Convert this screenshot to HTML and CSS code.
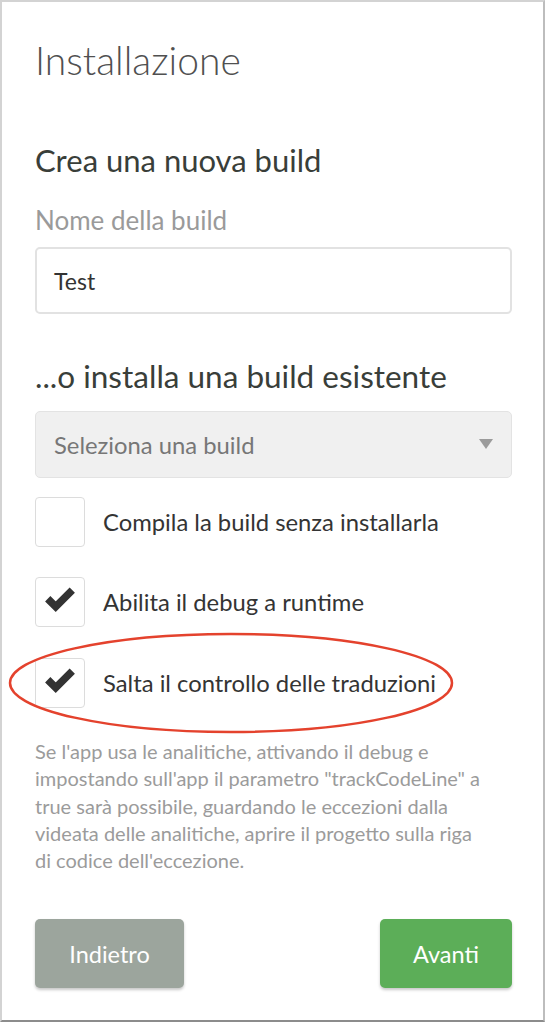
FILE: index.html
```html
<!DOCTYPE html>
<html lang="it">
<head>
<meta charset="utf-8">
<title>Installazione</title>
<link rel="stylesheet" href="styles.css">
</head>
<body>
<div class="frame">
  <h1 class="title">Installazione</h1>

  <h2 class="section">Crea una nuova build</h2>
  <label class="field-label">Nome della build</label>
  <div class="input">Test</div>

  <h2 class="section section-existing">...o installa una build esistente</h2>
  <div class="select">
    <span class="select-text">Seleziona una build</span>
    <span class="caret"></span>
  </div>

  <ul class="options">
    <li class="option">
      <span class="box"></span>
      <span class="option-label">Compila la build senza installarla</span>
    </li>
    <li class="option">
      <span class="box"><svg class="check" viewBox="0 0 30 25" width="32" height="26.7"><polyline points="3.5,11 11,18.5 26.5,3" /></svg></span>
      <span class="option-label">Abilita il debug a runtime</span>
    </li>
    <li class="option">
      <span class="box"><svg class="check" viewBox="0 0 30 25" width="32" height="26.7"><polyline points="3.5,11 11,18.5 26.5,3" /></svg></span>
      <span class="option-label">Salta il controllo delle traduzioni</span>
    </li>
  </ul>

  <p class="note">Se l'app usa le analitiche, attivando il debug e<br>impostando sull'app il parametro "trackCodeLine" a<br>true sarà possibile, guardando le eccezioni dalla<br>videata delle analitiche, aprire il progetto sulla riga<br>di codice dell'eccezione.</p>

  <div class="actions">
    <button class="btn btn-back">Indietro</button>
    <button class="btn btn-next">Avanti</button>
  </div>

  <svg class="annotation" viewBox="0 0 446 102" width="446" height="102"><ellipse cx="223" cy="51" rx="221" ry="49" /></svg>
</div>
</body>
</html>
```

FILE: styles.css
```css
html, body {
  margin: 0;
  padding: 0;
  background: #ffffff;
}

.frame {
  position: relative;
  box-sizing: border-box;
  width: 545px;
  height: 1022px;
  border: 2px solid #d3d3d3;
  border-right-color: #bdbdbd;
  border-bottom-color: #8c8c8c;
  padding: 36px 31px 0 33px;
  font-family: "Lato", "Liberation Sans", sans-serif;
  background: #ffffff;
}

.title {
  margin: 0;
  font-weight: 300;
  font-size: 39px;
  line-height: 44px;
  color: #505050;
}

.section {
  margin: 60px 0 0;
  font-weight: 400;
  font-size: 31px;
  line-height: 36px;
  color: #393e39;
}

.field-label {
  display: block;
  margin-top: 26.5px;
  font-size: 26px;
  line-height: 30px;
  color: #9a9a9a;
}

.input {
  box-sizing: border-box;
  margin-top: 12.5px;
  height: 67px;
  border: 2px solid #e2e2e2;
  border-radius: 5px;
  padding: 0 17px;
  display: flex;
  align-items: center;
  font-size: 23px;
  color: #333333;
}

.section-existing {
  margin-top: 43.6px;
  font-size: 31.5px;
}

.select {
  box-sizing: border-box;
  margin-top: 17.7px;
  height: 67px;
  background: #f0f0f0;
  border: 1px solid #e3e3e3;
  border-radius: 5px;
  padding: 0 18px 0 18px;
  display: flex;
  align-items: center;
  justify-content: space-between;
  font-size: 23.8px;
  color: #777777;
}

.caret {
  width: 0;
  height: 0;
  border-left: 7px solid transparent;
  border-right: 7px solid transparent;
  border-top: 10px solid #9b9b9b;
  margin-bottom: 2px;
}

.options {
  list-style: none;
  margin: 18.7px 0 0;
  padding: 0;
  display: flex;
  flex-direction: column;
  gap: 30.3px;
}

.option {
  display: flex;
  align-items: center;
  gap: 18px;
  height: 50px;
}

.box {
  box-sizing: border-box;
  flex: 0 0 50px;
  width: 50px;
  height: 50px;
  border: 1.5px solid #dcdcdc;
  border-radius: 4px;
  display: flex;
  align-items: center;
  justify-content: center;
}

.check {
  display: block;
  margin-top: -3px;
}

.check polyline {
  fill: none;
  stroke: #333333;
  stroke-width: 7;
  stroke-linecap: butt;
  stroke-linejoin: miter;
}

.option-label {
  font-size: 23.8px;
  line-height: 28px;
  color: #343434;
}

.note {
  margin: 30.7px 0 0;
  font-size: 20px;
  line-height: 27.2px;
  color: #9b9b9b;
  white-space: nowrap;
}

.actions {
  margin-top: 45px;
  display: flex;
  justify-content: space-between;
}

.btn {
  height: 69px;
  padding: 0;
  border: 0;
  border-radius: 5px;
  font-family: inherit;
  font-size: 23.5px;
  color: #ffffff;
  box-shadow: 0 2px 3px rgba(0, 0, 0, 0.22);
}

.btn-back {
  width: 149px;
  background: #9ca59d;
}

.btn-next {
  width: 132px;
  background: #5cae58;
}

.annotation {
  position: absolute;
  left: 6px;
  top: 630px;
  overflow: visible;
}

.annotation ellipse {
  fill: none;
  stroke: #e4422d;
  stroke-width: 2.5;
}
```
